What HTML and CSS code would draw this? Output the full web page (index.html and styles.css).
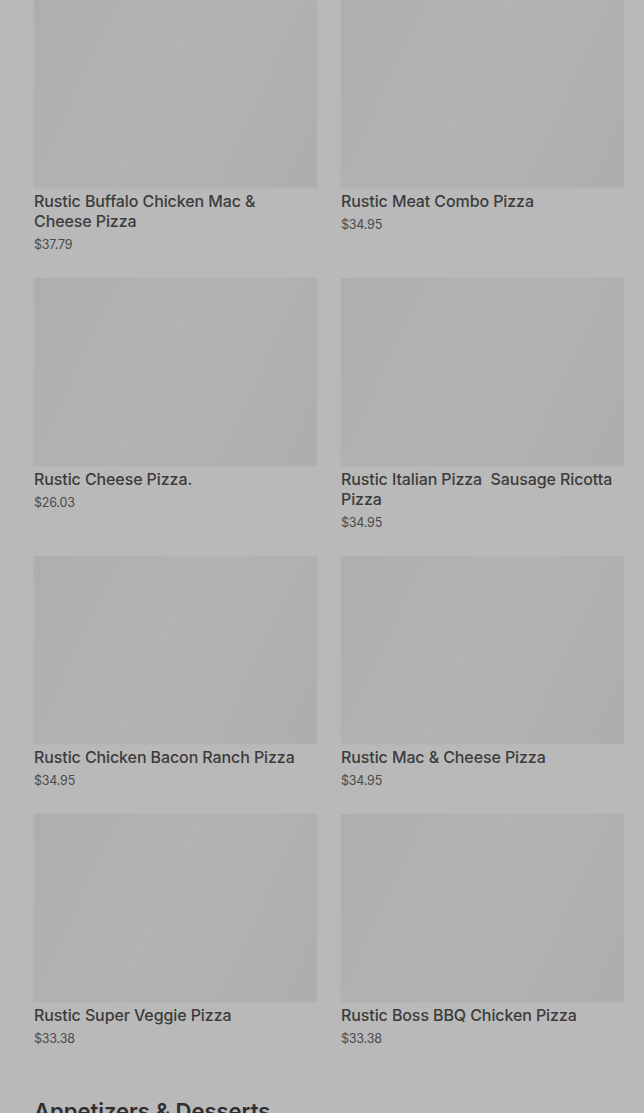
FILE: index.html
```html
<!DOCTYPE html>
<html lang="en">

<head>
    <meta charset="UTF-8">
    <meta name="viewport" content="width=device-width, initial-scale=1.0">
    <title>Rustic Pizza Menu</title>
    <link rel="stylesheet" href="styles.css">
</head>

<body>
    <div class="menu">
        <div class="menu-grid">
            <div class="item">
                <div class="item-img"></div>
                <h3 class="item-name">Rustic Buffalo Chicken Mac &amp; Cheese Pizza</h3>
                <p class="item-price">$37.79</p>
            </div>
            <div class="item">
                <div class="item-img"></div>
                <h3 class="item-name">Rustic Meat Combo Pizza</h3>
                <p class="item-price">$34.95</p>
            </div>
            <div class="item">
                <div class="item-img"></div>
                <h3 class="item-name">Rustic Cheese Pizza.</h3>
                <p class="item-price">$26.03</p>
            </div>
            <div class="item">
                <div class="item-img"></div>
                <h3 class="item-name">Rustic Italian Pizza&nbsp; Sausage Ricotta Pizza</h3>
                <p class="item-price">$34.95</p>
            </div>
            <div class="item">
                <div class="item-img"></div>
                <h3 class="item-name">Rustic Chicken Bacon Ranch Pizza</h3>
                <p class="item-price">$34.95</p>
            </div>
            <div class="item">
                <div class="item-img"></div>
                <h3 class="item-name">Rustic Mac &amp; Cheese Pizza</h3>
                <p class="item-price">$34.95</p>
            </div>
            <div class="item">
                <div class="item-img"></div>
                <h3 class="item-name">Rustic Super Veggie Pizza</h3>
                <p class="item-price">$33.38</p>
            </div>
            <div class="item">
                <div class="item-img"></div>
                <h3 class="item-name">Rustic Boss BBQ Chicken Pizza</h3>
                <p class="item-price">$33.38</p>
            </div>
        </div>

        <h2 class="section-title">Appetizers &amp; Desserts</h2>
    </div>
</body>

</html>
```

FILE: styles.css
```css
body {
    margin: 0;
    background-color: #b9b9b9;
    font-family: Inter, Roboto, "Liberation Sans", sans-serif;
    color: #3a3a3a;
    overflow: hidden;
}

.menu {
    padding: 0 20px 0 34px;
}

.menu-grid {
    display: grid;
    grid-template-columns: 1fr 1fr;
    column-gap: 24px;
    row-gap: 24px;
}

.item-img {
    height: 187px;
    background: linear-gradient(115deg, #aeaeae 0%, #b3b3b3 45%, #b1b1b1 70%, #adadad 100%);
    box-shadow: 0 1px 2px rgba(0, 0, 0, 0.06);
}

.item-name {
    margin: 4px 8px 0 0;
    font-size: 16px;
    line-height: 20px;
    font-weight: 500;
    letter-spacing: -0.1px;
    color: #3c3c3c;
}

.item-price {
    margin: 5px 0 0;
    font-size: 12.5px;
    line-height: 18px;
    letter-spacing: -0.2px;
    color: #4a4a4a;
}

.section-title {
    margin: 49px 0 0;
    font-size: 22px;
    line-height: 28px;
    font-weight: 600;
    color: #2e2e2e;
}
```
